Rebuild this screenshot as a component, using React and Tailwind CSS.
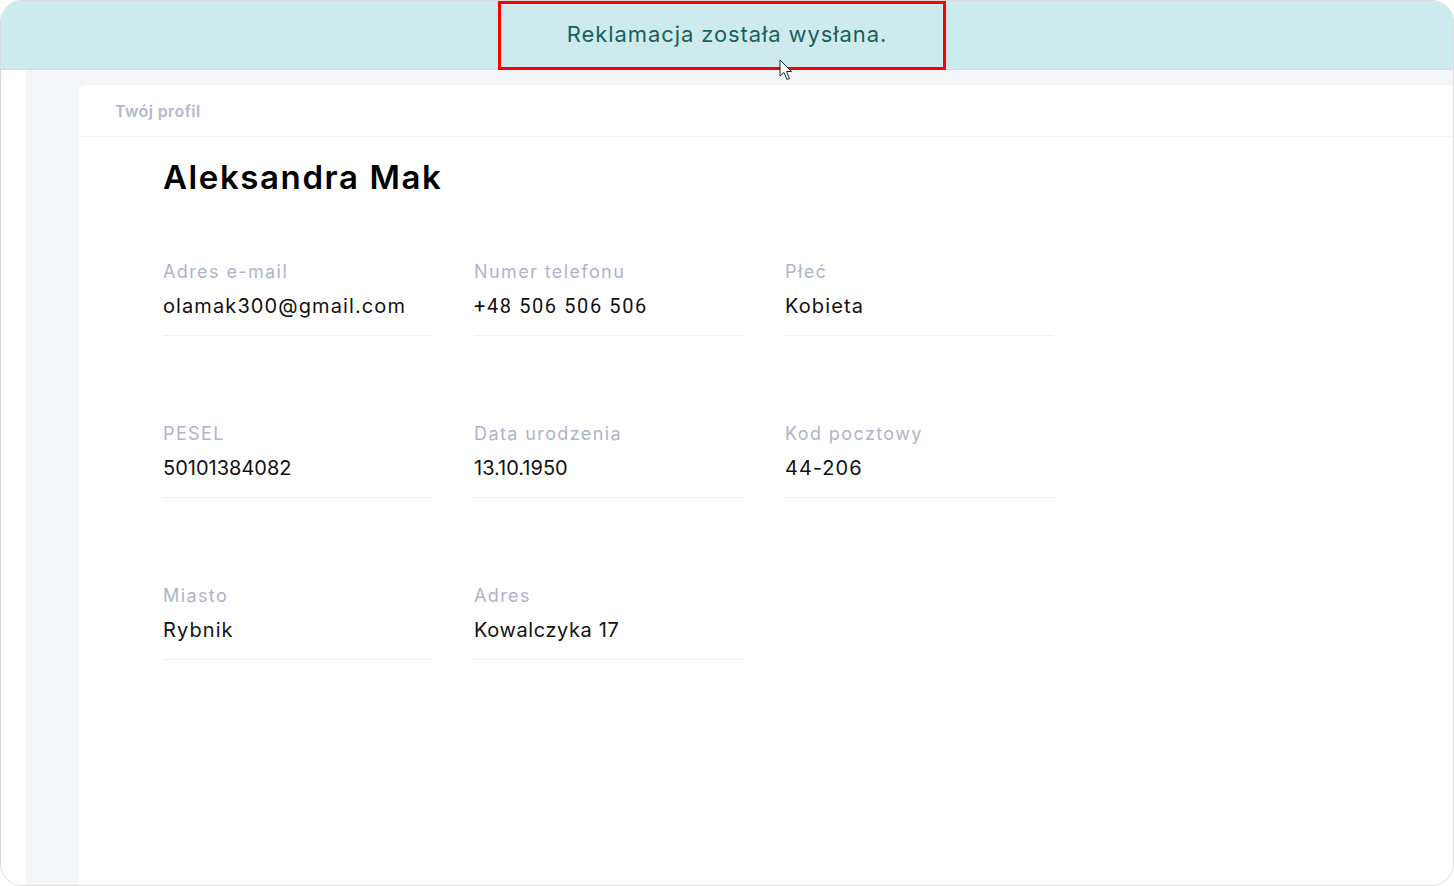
import React from "react";

const font = { fontFamily: "Inter, 'Noto Sans', sans-serif" };

const fields = [
  { label: "Adres e-mail", value: "olamak300@gmail.com", track: "tracking-[1.1px]" },
  { label: "Numer telefonu", value: "+48 506 506 506", track: "font-['Roboto'] tracking-[1.6px]" },
  { label: "Płeć", value: "Kobieta", track: "tracking-[1.1px]" },
  { label: "PESEL", value: "50101384082", track: "tracking-normal" },
  { label: "Data urodzenia", value: "13.10.1950", track: "tracking-normal" },
  { label: "Kod pocztowy", value: "44-206", track: "tracking-[1px]" },
  { label: "Miasto", value: "Rybnik", track: "tracking-[1.1px]" },
  { label: "Adres", value: "Kowalczyka 17", track: "tracking-[0.6px]" },
];

function Field({ label, value, track }) {
  return (
    <div className="border-b border-[#f0f1f4] pb-[14px]">
      <div className="text-[18px] leading-[26px] tracking-[1.4px] text-[#aeb4cb]">
        {label}
      </div>
      <div className={`mt-[6px] text-[20px] leading-[30px] text-[#111] ${track}`}>
        {value}
      </div>
    </div>
  );
}

function Cursor() {
  return (
    <svg
      className="absolute left-[778px] top-[58px]"
      width="16"
      height="24"
      viewBox="0 0 16 24"
    >
      <path
        d="M1 1 L1 17 L5 13.5 L8 20.5 L10.5 19.5 L7.5 12.5 L12.5 12.5 Z"
        fill="#fff"
        stroke="#222"
        strokeWidth="1"
        strokeLinejoin="round"
      />
    </svg>
  );
}

export default function App() {
  return (
    <div style={font} className="w-[1454px] h-[886px] bg-white">
      <div className="relative w-full h-full rounded-[22px] border border-[#dadada] overflow-hidden bg-white flex flex-col">
        <div className="h-[69px] shrink-0 bg-[#cdebec] border-b border-[#c5e3e5] flex items-center justify-center">
          <span className="text-[22px] tracking-[0.9px] text-[#1b5f5d] pb-[1px]">
            Reklamacja została wysłana.
          </span>
        </div>
        <div className="absolute left-[497px] top-0 w-[448px] h-[69px] border-[3px] border-[#ff0000]" />
        <Cursor />

        <div className="flex flex-1 min-h-0">
          <div className="w-[25px] shrink-0 bg-white" />
          <div className="flex-1 bg-[#f5f6fa] pt-[15px] pl-[53px]">
            <div className="h-full bg-white rounded-tl-[6px]">
              <div className="h-[52px] border-b border-[#f1f2f6] flex items-center pl-[36px]">
                <span className="text-[16px] font-semibold tracking-[0.4px] text-[#b4b8cb]">
                  Twój profil
                </span>
              </div>
              <div className="pl-[84px] pt-[20px]">
                <h1 className="text-[33px] leading-[40px] font-semibold tracking-[1.6px] text-black">
                  Aleksandra Mak
                </h1>
                <div className="mt-[62px] grid grid-cols-[269px_269px_269px] gap-x-[42px] gap-y-[85px]">
                  {fields.map((f) => (
                    <Field key={f.label} {...f} />
                  ))}
                </div>
              </div>
            </div>
          </div>
        </div>
      </div>
    </div>
  );
}
